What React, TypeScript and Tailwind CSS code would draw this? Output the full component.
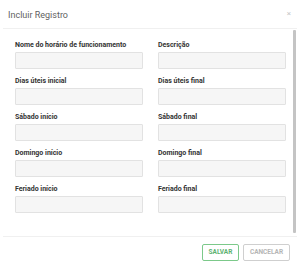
import React from 'react';

const fields: [string, string][] = [
  ['Nome do horário de funcionamento', 'Descrição'],
  ['Dias úteis inicial', 'Dias úteis final'],
  ['Sábado início', 'Sábado final'],
  ['Domingo início', 'Domingo final'],
  ['Feriado início', 'Feriado final'],
];

const Field: React.FC<{ label: string }> = ({ label }) => (
  <div className="flex flex-col gap-[2px]">
    <label className="h-[10px] text-[7px] leading-[10px] font-bold text-[#333333] whitespace-nowrap">{label}</label>
    <input
      type="text"
      className="h-[17px] w-[128px] rounded-[1px] border border-[#e2e2e2] bg-[#f6f6f6] outline-none"
    />
  </div>
);

const App: React.FC = () => {
  return (
    <div className="w-[300px] h-[266px] bg-white flex flex-col font-['Roboto',sans-serif] overflow-hidden">
      {/* Header */}
      <div className="h-[29px] mx-[3px] flex items-center justify-between pl-[5px] pr-[6px] border-b border-[#f0f0f0]">
        <h1 className="text-[9px] text-[#5f5f5f] pt-[3px]">Incluir Registro</h1>
        <span className="text-[8px] leading-none text-[#c8c8c8] -mt-[1px]">×</span>
      </div>

      {/* Body */}
      <div className="flex h-[207px]">
        <div className="flex-1 pl-[15px] pt-[11px] flex flex-col gap-[7px]">
          {fields.map(([a, b]) => (
            <div key={a} className="flex gap-[15px]">
              <Field label={a} />
              <Field label={b} />
            </div>
          ))}
        </div>
        <div className="w-[3px] mr-[4px] mt-[1px] mb-[3px] bg-[#c4c4c4] rounded-[1px]" />
      </div>

      {/* Footer */}
      <div className="flex-1 mx-[3px] border-t border-[#f0f0f0] flex justify-end items-start gap-[4px] pt-[7px] pr-[7px]">
        <button className="h-[17px] w-[37px] rounded-[2px] border-[1.5px] border-[#7cc98a] text-[6.5px] font-bold text-[#5cb270]">
          SALVAR
        </button>
        <button className="h-[17px] w-[47px] rounded-[2px] border-[1.5px] border-[#cfcfcf] text-[6.5px] font-bold text-[#b5b5b5]">
          CANCELAR
        </button>
      </div>
    </div>
  );
};

export default App;
